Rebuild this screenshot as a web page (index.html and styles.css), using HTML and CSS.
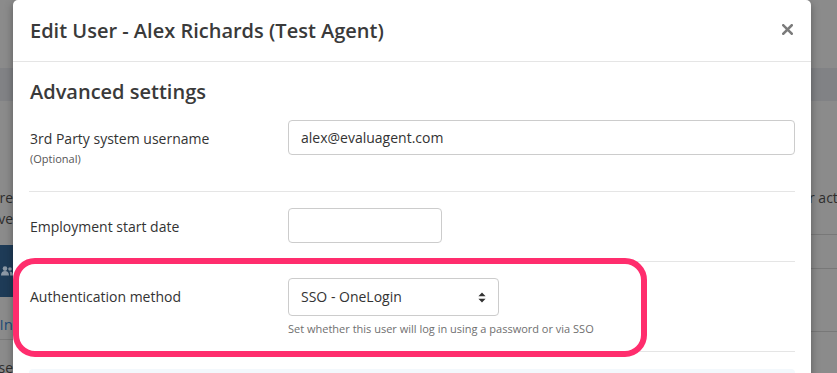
FILE: index.html
```html
<!DOCTYPE html>
<html lang="en">
<head>
    <meta charset="UTF-8">
    <meta name="viewport" content="width=device-width, initial-scale=1.0">
    <title>Edit User</title>
    <link rel="stylesheet" href="styles.css">
</head>
<body>
    <div class="page">
        <div class="page-band"></div>
        <div class="page-sides">
            <div class="side side-left">
                <div class="side-text"><span>users are</span></div>
                <div class="side-text"><span>they have</span></div>
                <div class="side-nav">
                    <svg width="12" height="10" viewBox="0 0 12 10">
                        <circle cx="4" cy="2.6" r="2.3" fill="#8d99a6"/>
                        <path d="M0 9.5c0-3 1.6-4.4 4-4.4s4 1.4 4 4.4z" fill="#8d99a6"/>
                        <circle cx="9" cy="3" r="1.8" fill="#8d99a6"/>
                        <path d="M8.6 5.6c2 0 3.4 1 3.4 3.9H9.2c0-1.6-.3-2.9-.6-3.9z" fill="#8d99a6"/>
                    </svg>
                </div>
                <div class="side-link"><span>In</span></div>
                <div class="side-rule"></div>
                <div class="side-text side-last"><span>Use</span></div>
            </div>
            <div class="side side-right">
                <div class="side-text right-text">r actions</div>
                <div class="right-rule rule-a"></div>
                <div class="right-rule rule-b"></div>
                <div class="right-rule rule-c"></div>
            </div>
        </div>
    </div>

    <div class="modal">
        <div class="modal-header">
            <h2 class="modal-title">Edit User - Alex Richards (Test Agent)</h2>
            <svg class="close" width="11" height="11" viewBox="0 0 11 11" aria-label="Close">
                <path d="M1.3 1.3l8.4 8.4M9.7 1.3l-8.4 8.4" stroke="#7b7b7b" stroke-width="2.6" stroke-linecap="square"/>
            </svg>
        </div>
        <div class="modal-body">
            <h3 class="section-title">Advanced settings</h3>

            <div class="form-row first-row">
                <div class="form-label">
                    <div>3rd Party system username</div>
                    <div class="optional">(Optional)</div>
                </div>
                <div class="form-field">
                    <div class="input input-wide">alex@evaluagent.com</div>
                </div>
            </div>

            <div class="form-row">
                <div class="form-label">Employment start date</div>
                <div class="form-field">
                    <div class="input input-date"></div>
                </div>
            </div>

            <div class="form-row auth-row">
                <div class="form-label">Authentication method</div>
                <div class="form-field">
                    <div class="input select">
                        <span>SSO - OneLogin</span>
                        <svg width="8" height="11" viewBox="0 0 8 11">
                            <path d="M4 0.5L7.6 4.3H0.4z M4 10.5L7.6 6.7H0.4z" fill="#333"/>
                        </svg>
                    </div>
                    <div class="help">Set whether this user will log in using a password or via SSO</div>
                </div>
                <div class="highlight"></div>
            </div>

            <div class="info-box"></div>
        </div>
    </div>
</body>
</html>
```

FILE: styles.css
```css
body {
    margin: 0;
    background: #8b8b8b;
    font-family: 'Open Sans', sans-serif;
    color: #333;
    font-size: 14px;
    overflow: hidden;
    height: 373px;
}

/* page behind the modal */
.page {
    position: relative;
}

.page-band {
    margin-top: 68px;
    height: 33px;
    background: #818285;
}

.page-sides {
    display: flex;
    justify-content: space-between;
}

.side-left {
    width: 13px;
    overflow: hidden;
    padding-top: 86px;
}

.side-right {
    width: 26px;
    overflow: hidden;
    padding-top: 86px;
}

.side-text {
    display: flex;
    justify-content: flex-end;
    white-space: nowrap;
    height: 21px;
    line-height: 21px;
    font-size: 14px;
    color: #2e2e2e;
}

.side-nav {
    margin-top: 16px;
    height: 52px;
    background: #1e3b57;
    display: flex;
    align-items: center;
    padding-left: 1px;
}

.side-link {
    display: flex;
    justify-content: flex-end;
    margin-top: 16px;
    height: 22px;
    line-height: 22px;
    font-size: 15px;
    color: #1f4b78;
}

.side-rule {
    margin-top: 4px;
    height: 1px;
    background: #7a7a7a;
}

.side-last {
    margin-top: 17px;
}

.right-text {
    justify-content: flex-start;
    margin-left: -2px;
}

.right-rule {
    height: 1px;
    background: #787878;
}

.rule-a { margin-top: 26px; }
.rule-b { margin-top: 33px; }
.rule-c { margin-top: 62px; }

/* modal */
.modal {
    position: absolute;
    top: 0;
    left: 13px;
    width: 798px;
    height: 400px;
    background: #fff;
    border-radius: 5px;
    box-shadow: 0 3px 9px rgba(0, 0, 0, 0.35);
}

.modal-header {
    display: flex;
    align-items: center;
    justify-content: space-between;
    height: 61px;
    padding: 0 17px 0 17px;
    border-bottom: 1px solid #e5e5e5;
}

.modal-title {
    margin: 0;
    font-size: 20px;
    font-weight: 600;
    color: #3a3a3a;
    line-height: 30px;
}

.close {
    margin-top: -3px;
    margin-right: 1px;
}

.modal-body {
    padding: 16px 16px 0 16px;
}

.section-title {
    margin: 0 0 0 1px;
    font-size: 20px;
    font-weight: 600;
    line-height: 28px;
    color: #3a3a3a;
}

.form-row {
    position: relative;
    display: flex;
    padding: 16px 0 18px;
    border-bottom: 1px solid #e5e5e5;
}

.first-row {
    padding-top: 14px;
    padding-bottom: 24px;
}

.auth-row {
    padding-bottom: 14px;
}

.form-label {
    width: 258px;
    flex-shrink: 0;
    padding-top: 9px;
    padding-left: 1px;
    line-height: 20px;
    font-size: 14px;
    color: #333;
}

.optional {
    margin-top: 2px;
    font-size: 11px;
    line-height: 16px;
    color: #555;
}

.form-field {
    flex: 1;
}

.input {
    box-sizing: border-box;
    height: 35px;
    border: 1px solid #ccc;
    border-radius: 4px;
    padding: 0 12px;
    line-height: 33px;
    font-size: 14px;
    color: #333;
}

.input-date {
    width: 154px;
}

.select {
    width: 211px;
    height: 38px;
    line-height: 36px;
    display: flex;
    justify-content: space-between;
    align-items: center;
    padding-right: 12px;
}

.help {
    margin-top: 5px;
    font-size: 11px;
    line-height: 16px;
    color: #6f6f6f;
}

.highlight {
    position: absolute;
    left: -16px;
    top: -4px;
    width: 622px;
    height: 87px;
    border: 6px solid #ff2d6d;
    border-radius: 22px;
}

.info-box {
    margin-top: 17px;
    height: 40px;
    background: #f3f8fc;
    border-radius: 4px;
}
```
